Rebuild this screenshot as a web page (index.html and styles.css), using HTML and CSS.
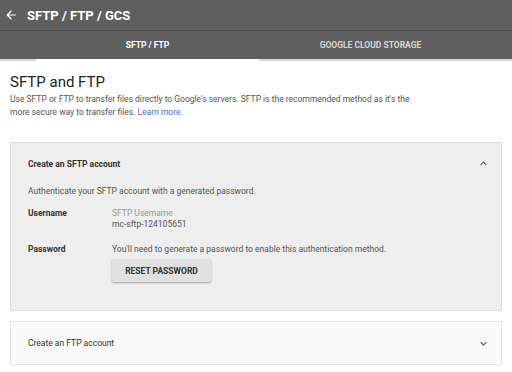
FILE: index.html
```html
<!DOCTYPE html>
<html lang="en">

    <head>
        <meta charset="UTF-8">
        <meta name="viewport" content="width=device-width, initial-scale=1.0">
        <title>SFTP / FTP / GCS</title>
        <link rel="stylesheet" href="styles.css">
    </head>

    <body>
        <div class="topbar">
            <svg class="back" width="14" height="14" viewBox="0 0 24 24">
                <path d="M20 11H7.83l5.59-5.59L12 4l-8 8 8 8 1.41-1.41L7.83 13H20v-2z" fill="#fff"/>
            </svg>
            <div class="title">SFTP / FTP / GCS</div>
        </div>

        <div class="tabs">
            <div class="tab active">SFTP / FTP</div>
            <div class="tab">Google Cloud Storage</div>
        </div>

        <div class="content">
            <h1>SFTP and FTP</h1>
            <p class="intro">Use SFTP or FTP to transfer files directly to Google's servers. SFTP is the recommended method as it's the
                more secure way to transfer files. <a href="#">Learn more.</a></p>

            <div class="card open">
                <div class="card-head">
                    <span>Create an SFTP account</span>
                    <svg width="13" height="13" viewBox="0 0 24 24">
                        <path d="M7.41 15.41L12 10.83l4.59 4.58L18 14l-6-6-6 6z" fill="#555"/>
                    </svg>
                </div>
                <div class="card-body">
                    <div class="auth">Authenticate your SFTP account with a generated password.</div>
                    <div class="row">
                        <div class="label">Username</div>
                        <div class="value">
                            <div class="hint">SFTP Usemame</div>
                            <div>mc-sftp-124105651</div>
                        </div>
                    </div>
                    <div class="row pass">
                        <div class="label">Password</div>
                        <div class="value">
                            <div>You'll need to generate a password to enable this authentication method.</div>
                            <button class="reset">RESET PASSWORD</button>
                        </div>
                    </div>
                </div>
            </div>

            <div class="card">
                <div class="card-head">
                    <span>Create an FTP account</span>
                    <svg width="13" height="13" viewBox="0 0 24 24">
                        <path d="M7.41 8.59L12 13.17l4.59-4.58L18 10l-6 6-6-6z" fill="#555"/>
                    </svg>
                </div>
            </div>
        </div>
    </body>

</html>
```

FILE: styles.css
```css
body {
    margin: 0;
    padding: 0;
    font-family: Roboto, "Liberation Sans", sans-serif;
    background-color: white;
    color: #444;
}

.topbar {
    height: 30px;
    background-color: #5f5f5f;
    border-bottom: 1px solid #4c4c4c;
    display: flex;
    align-items: center;
    padding-left: 4px;
}

.back {
    margin-right: 9px;
}

.title {
    color: white;
    font-size: 13px;
    font-weight: 700;
}

.tabs {
    height: 28px;
    background-color: #5f5f5f;
    border-bottom: 2px solid #d8d8d8;
    display: flex;
    padding-left: 36px;
}

.tab {
    width: 223px;
    display: flex;
    align-items: center;
    justify-content: center;
    font-size: 8.5px;
    font-weight: 700;
    text-transform: uppercase;
    color: #d6d6d6;
    margin-bottom: -2px;
    border-bottom: 2px solid transparent;
}

.tab.active {
    color: white;
    border-bottom-color: white;
}

.content {
    padding: 12px 10px 0 10px;
}

h1 {
    margin: 0;
    font-size: 15px;
    font-weight: 400;
    color: #222;
}

.intro {
    margin: 2px 0 0 0;
    font-size: 8.5px;
    line-height: 13px;
    color: #555;
    width: 420px;
}

.intro a {
    color: #4a6fd8;
    text-decoration: none;
}

.card {
    margin-top: 10px;
    border: 1px solid #e4e4e4;
    background-color: #fafafa;
}

.content .open {
    margin-top: 23px;
    background-color: #eeeeee;
    border-color: #dcdcdc;
}

.card-head {
    height: 42px;
    display: flex;
    align-items: center;
    justify-content: space-between;
    padding: 0 11px 0 17px;
    font-size: 8.5px;
    color: #333;
}

.open .card-head {
    font-weight: 700;
    height: 41px;
}

.card-body {
    padding: 2px 17px 28px 17px;
    font-size: 8.5px;
}

.auth {
    color: #555;
}

.row {
    display: flex;
    margin-top: 12px;
}

.row.pass {
    margin-top: 14px;
}

.label {
    width: 84px;
    font-weight: 700;
    color: #333;
}

.value {
    color: #555;
    line-height: 11px;
}

.hint {
    color: #9a9a9a;
}

.reset {
    display: block;
    margin-top: 4px;
    width: 99px;
    height: 23px;
    border: none;
    border-radius: 2px;
    background-color: #e0e0e0;
    box-shadow: 0 1px 2px rgba(0, 0, 0, 0.35);
    font-family: Roboto, "Liberation Sans", sans-serif;
    font-size: 8.5px;
    font-weight: 700;
    color: #333;
    padding: 0;
}
```
